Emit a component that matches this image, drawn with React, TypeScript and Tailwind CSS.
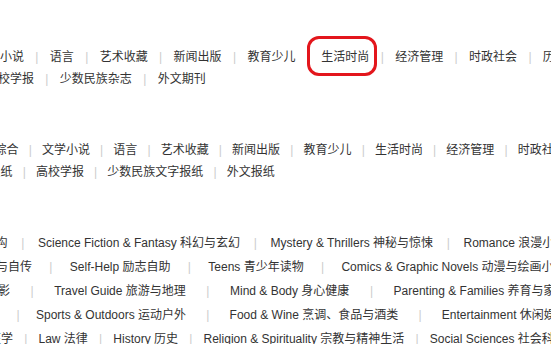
import React from 'react';

type Row = {
  lead?: string;
  leadW?: string; // clip width of the cut-off first item
  items: string[];
  sep: string; // width class of a separator slot
  firstSep?: string;
};

const topRows: Row[] = [
  {
    lead: '文学小说',
    leadW: 'w-[24px]',
    items: ['语言', '艺术收藏', '新闻出版', '教育少儿', '生活时尚', '经济管理', '时政社会', '历史地理'],
    sep: 'w-[25.85px]',
  },
  {
    lead: '高校学报',
    leadW: 'w-[34px]',
    items: ['少数民族杂志', '外文期刊'],
    sep: 'w-[25.85px]',
  },
];

const midRows: Row[] = [
  {
    lead: '综合',
    leadW: 'w-[18.5px]',
    items: ['文学小说', '语言', '艺术收藏', '新闻出版', '教育少儿', '生活时尚', '经济管理', '时政社会'],
    sep: 'w-[23.4px]',
  },
  {
    lead: '专业报纸',
    leadW: 'w-[12.5px]',
    items: ['高校学报', '少数民族文字报纸', '外文报纸'],
    sep: 'w-[23.4px]',
  },
];

const bookRows: Row[] = [
  {
    lead: '文学与虚构',
    leadW: 'w-[7.5px]',
    items: ['Science Fiction & Fantasy 科幻与玄幻', 'Mystery & Thrillers 神秘与惊悚', 'Romance 浪漫小说'],
    sep: 'w-[30.5px]',
  },
  {
    lead: '传记与自传',
    leadW: 'w-[32px]',
    items: ['Self-Help 励志自助', 'Teens 青少年读物', 'Comics & Graphic Novels 动漫与绘画小说'],
    sep: 'w-[37.8px]',
  },
  {
    lead: '艺术与摄影',
    leadW: 'w-[10px]',
    items: ['Travel Guide 旅游与地理', 'Mind & Body 身心健康', 'Parenting & Families 养育与家庭'],
    sep: 'w-[44.2px]',
  },
  {
    items: ['Sports & Outdoors 运动户外', 'Food & Wine 烹调、食品与酒类', 'Entertainment 休闲娱乐'],
    sep: 'w-[43.5px]',
    firstSep: 'w-[36px]',
  },
  {
    lead: '医学',
    leadW: 'w-[13px]',
    items: ['Law 法律', 'History 历史', 'Religion & Spirituality 宗教与精神生活', 'Social Sciences 社会科学'],
    sep: 'w-[25.5px]',
  },
];

function Sep({ w }: { w: string }) {
  return <span className={`${w} shrink-0 text-center text-[#cccccc]`}>|</span>;
}

function LinkRow({ row, lh }: { row: Row; lh: string }) {
  return (
    <div className={`flex whitespace-nowrap ${lh}`}>
      {row.lead && (
        <span className={`${row.leadW} flex shrink-0 justify-end overflow-hidden`}>
          <span className="shrink-0">{row.lead}</span>
        </span>
      )}
      {row.firstSep && <Sep w={row.firstSep} />}
      {row.items.map((it, i) => (
        <React.Fragment key={it}>
          {(i > 0 || row.lead) && <Sep w={row.sep} />}
          <a className="shrink-0 cursor-pointer hover:text-[#e4393c]">{it}</a>
        </React.Fragment>
      ))}
    </div>
  );
}

export default function App() {
  return (
    <div className="relative h-[344px] w-[551px] overflow-hidden bg-white font-['Liberation_Sans','Noto_Sans_CJK_SC',sans-serif] text-[12px] text-[#333333]">
      <div className="pt-[46px]">
        {topRows.map((r, i) => (
          <LinkRow key={i} row={r} lh="leading-[22px]" />
        ))}
      </div>

      <div className="mt-[49px]">
        {midRows.map((r, i) => (
          <LinkRow key={i} row={r} lh="leading-[22px]" />
        ))}
      </div>

      <div className="mt-[48.4px]">
        {bookRows.map((r, i) => (
          <LinkRow key={i} row={r} lh="leading-[24px]" />
        ))}
      </div>

      {/* highlight around 生活时尚 */}
      <div className="pointer-events-none absolute left-[307px] top-[36px] h-[40px] w-[70px] rounded-[12px] border-[3px] border-[#e3161c]" />
    </div>
  );
}
